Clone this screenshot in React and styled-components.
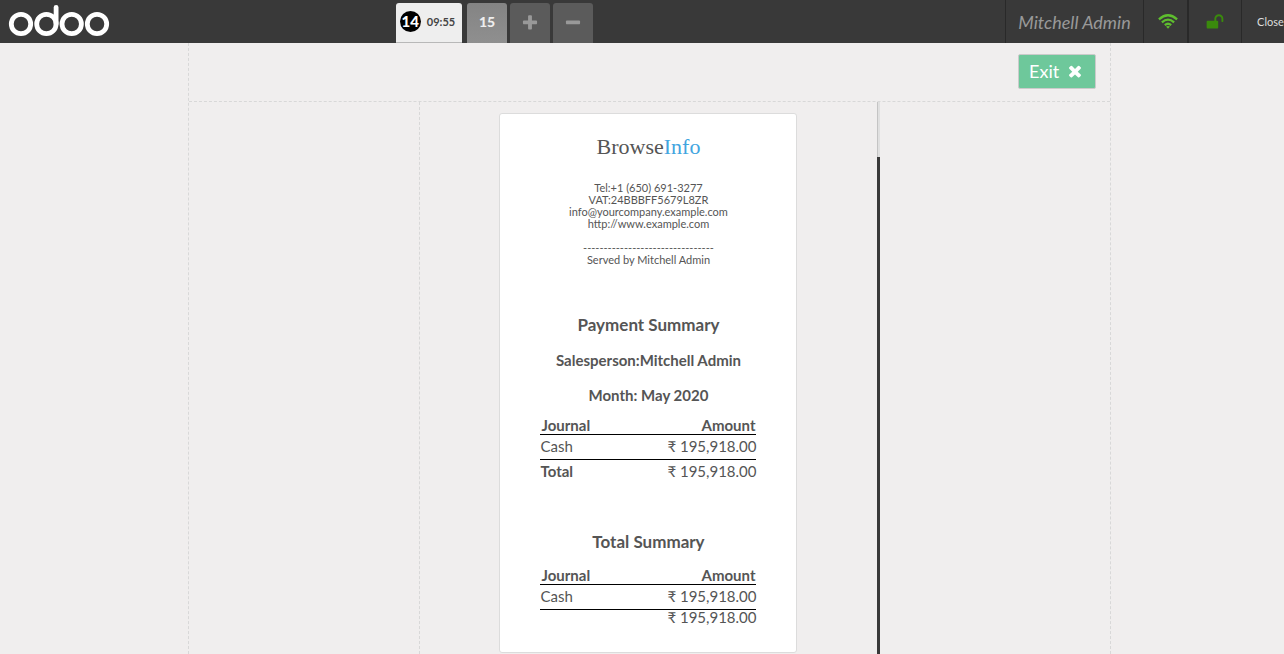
import React from "react";
import styled, { createGlobalStyle, css } from "styled-components";

const Global = createGlobalStyle`
  *, *::before, *::after { box-sizing: border-box; }
  html, body, #root { height: 100%; }
  body {
    margin: 0;
    overflow: hidden;
    background: #f0eeee;
    color: #555555;
    font-family: Lato, "Noto Sans", sans-serif;
  }
  button { font-family: inherit; margin: 0; cursor: pointer; }
`;

const Pos = styled.div`
  display: flex;
  flex-direction: column;
  width: calc(100% + 15px);
  height: 100vh;
`;

const TopBar = styled.header`
  display: flex;
  flex: none;
  height: 43px;
  background: #393939;
  color: #999999;
`;

const Brand = styled.a`
  flex: none;
  width: 396px;
  padding: 5px 8px;
  svg { display: block; }
`;

const OrderTabs = styled.nav`
  display: flex;
  flex: 1;
  gap: 3px;
  padding-top: 3px;
`;

const tabLooks = {
  selected: css`
    width: 66px;
    margin-right: 2px;
    padding: 0 3px 3px 0;
    background: #eeeeee;
    color: #444444;
    border-bottom: 1px solid #b8b8b8;
  `,
  order: css`
    padding: 0 0 3px;
    background: linear-gradient(#848484, #8f8f8f);
    color: #eeeeee;
  `,
  tool: css`
    padding: 0;
    background: #5b5b5b;
    color: #999999;
  `,
};

const Tab = styled.button`
  display: flex;
  align-items: center;
  justify-content: center;
  gap: 6px;
  width: 40px;
  height: 40px;
  border: 0;
  border-radius: 3px 3px 0 0;
  font-size: 14px;
  font-weight: 900;
  ${({ $look }) => tabLooks[$look]}
`;

const Sequence = styled.span`
  width: 21px;
  height: 21px;
  border-radius: 50%;
  background: #000000;
  color: #ffffff;
  font-size: 15px;
  line-height: 21px;
  text-align: center;
`;

const OrderTime = styled.time`
  font-size: 11px;
  font-weight: 700;
`;

const Status = styled.div`
  display: flex;
  flex: none;
`;

const barItem = css`
  display: flex;
  align-items: center;
  justify-content: center;
  height: 43px;
  border: 0;
  border-left: 1px solid #292929;
  background: none;
`;

const UserName = styled.span`
  ${barItem}
  width: 138px;
  font-size: 18px;
  font-style: italic;
`;

const StatusButton = styled.button`
  ${barItem}
  width: ${({ $width }) => $width}px;
  padding: 0;
  color: ${({ $color }) => $color};
  font-size: 11px;
`;

const ConnectionButton = styled(StatusButton)`
  padding-left: 5px;
  border-right: 1px solid #292929;
`;

const Screen = styled.main`
  display: flex;
  flex: 1;
  flex-direction: column;
  min-height: 0;
  width: 71%;
  min-width: 600px;
  max-width: 1024px;
  margin: 0 auto;
  border: dashed #d8d8d8;
  border-width: 0 1px;
`;

const Toolbar = styled.div`
  display: flex;
  flex: none;
  align-items: flex-start;
  justify-content: flex-end;
  height: 59px;
  padding: 11px 14px;
  border-bottom: 1px dashed #d8d8d8;
`;

const ExitButton = styled.button`
  display: flex;
  align-items: center;
  justify-content: center;
  gap: 7px;
  width: 78px;
  height: 35px;
  padding: 0 0 1px;
  border: 1px solid #cbcbcb;
  border-radius: 2px;
  background: #6ec89b;
  color: #ffffff;
  font-size: 18px;
`;

const Columns = styled.div`
  display: grid;
  flex: 1;
  grid-template-columns: 1fr 2fr 1fr;
  min-height: 0;
`;

const ReceiptPane = styled.section`
  display: flex;
  grid-column: 2;
  min-height: 0;
  border-left: 1px dashed #d8d8d8;
`;

const ReceiptArea = styled.div`
  flex: 1;
  padding-top: 11px;
  overflow: hidden;
`;

const ScrollTrack = styled.div`
  width: 3px;
  padding-top: 55px;
  background: linear-gradient(90deg, #c4c4c4 1px, #e0e0e0 1px);
`;

const ScrollThumb = styled.div`
  height: 100%;
  background: #393939;
`;

const Ticket = styled.article`
  width: 298px;
  margin: 0 auto;
  padding: 20px 40px 28px;
  border: 1px solid #dcdcdc;
  border-radius: 3px;
  background: #ffffff;
  text-align: center;
`;

const Company = styled.div`
  font-family: "Liberation Serif", serif;
  font-size: 22px;
  line-height: 26px;
  span { color: #42a5e0; }
`;

const Contact = styled.address`
  margin: 22px 0 48px;
  font-size: 11px;
  font-style: normal;
  line-height: 12px;
  p { margin: 0; }
`;

const ServedBy = styled.div`
  margin-top: 12px;
`;

const Title = styled.h2`
  margin: 0;
  font-size: 17px;
  line-height: 22px;
`;

const Detail = styled.h3`
  margin: 0;
  padding-top: 16px;
  font-size: 15px;
  line-height: 19px;
  ${Title} + & { padding-top: 15px; }
`;

const Summary = styled.table`
  width: 100%;
  margin: ${({ $top }) => $top}px 0 0;
  border-collapse: collapse;
  font-size: 15px;
  line-height: 18px;
  th, td { padding: 0; text-align: left; }
  th:last-child, td:last-child { text-align: right; }
  thead th { padding: 0 1px; border-bottom: 1px solid #000000; }
  tbody td { padding: 2px 0 4px; }
  tfoot { line-height: 14px; }
  tfoot tr { border-top: 1px solid #000000; }
  tfoot th, tfoot td { padding-top: ${({ $foot }) => $foot}px; }
`;

const TotalSection = styled.section`
  margin-top: 53px;
`;

const shapes = {
  plus: "M1600 736v192q0 40-28 68t-68 28h-416v416q0 40-28 68t-68 28h-192q-40 0-68-28t-28-68v-416h-416q-40 0-68-28t-28-68v-192q0-40 28-68t68-28h416v-416q0-40 28-68t68-28h192q40 0 68 28t28 68v416h416q40 0 68 28t28 68z",
  minus: "M1600 736v192q0 40-28 68t-68 28h-1216q-40 0-68-28t-28-68v-192q0-40 28-68t68-28h1216q40 0 68 28t28 68z",
  times: "M1490 1322q0 40-28 68l-136 136q-28 28-68 28t-68-28l-294-294-294 294q-28 28-68 28t-68-28l-136-136q-28-28-28-68t28-68l294-294-294-294q-28-28-28-68t28-68l136-136q28-28 68-28t68 28l294 294 294-294q28-28 68-28t68 28l136 136q28 28 28 68t-28 68l-294 294 294 294q28 28 28 68z",
  unlock: "M1728 576v256q0 26-19 45t-45 19h-64q-26 0-45-19t-19-45v-256q0-106-75-181t-181-75-181 75-75 181v192h96q40 0 68 28t28 68v576q0 40-28 68t-68 28h-960q-40 0-68-28t-28-68v-576q0-40 28-68t68-28h672v-192q0-185 131.5-316.5t316.5-131.5 316.5 131.5 131.5 316.5z",
};

function Icon({ name, size = 18 }) {
  return (
    <svg width={size} height={size} viewBox="0 0 1792 1792" fill="currentColor" aria-hidden="true">
      <path d={shapes[name]} />
    </svg>
  );
}

function WifiIcon() {
  return (
    <svg width="20" height="15" viewBox="0 0 20 15" fill="none" stroke="currentColor" strokeWidth="2.3" aria-hidden="true">
      <path d="M0.9 5.3Q10 -2.7 19.1 5.3" />
      <path d="M3.9 8.3Q10 3 16.1 8.3" />
      <path d="M6.8 11.1Q10 8.5 13.2 11.1" />
      <path d="M8 12.6Q10 11.4 12 12.6L10 14.8Z" fill="currentColor" stroke="none" />
    </svg>
  );
}

function OdooLogo() {
  return (
    <svg width="102" height="32" viewBox="0 0 102 32" fill="none" stroke="#ffffff" strokeWidth="4.8" role="img" aria-label="odoo">
      <circle cx="13" cy="19" r="9.7" />
      <circle cx="38.4" cy="19" r="9.7" />
      <circle cx="63.7" cy="19" r="9.7" />
      <circle cx="89" cy="19" r="9.7" />
      <path d="M48.1 19V2.5" strokeLinecap="round" />
    </svg>
  );
}

function SummaryTable({ top, foot, totalLabel }) {
  return (
    <Summary $top={top} $foot={foot}>
      <thead>
        <tr><th scope="col">Journal</th><th scope="col">Amount</th></tr>
      </thead>
      <tbody>
        <tr><td>Cash</td><td>₹ 195,918.00</td></tr>
      </tbody>
      <tfoot>
        <tr><th scope="row">{totalLabel}</th><td>₹ 195,918.00</td></tr>
      </tfoot>
    </Summary>
  );
}

export default function App() {
  return (
    <>
      <Global />
      <Pos>
        <TopBar>
          <Brand href="#"><OdooLogo /></Brand>
          <OrderTabs aria-label="Orders">
            <Tab $look="selected"><Sequence>14</Sequence><OrderTime>09:55</OrderTime></Tab>
            <Tab $look="order">15</Tab>
            <Tab $look="tool" aria-label="New order"><Icon name="plus" /></Tab>
            <Tab $look="tool" aria-label="Delete order"><Icon name="minus" /></Tab>
          </OrderTabs>
          <Status>
            <UserName>Mitchell Admin</UserName>
            <ConnectionButton $width={45} $color="#5ebd2e" aria-label="Connection"><WifiIcon /></ConnectionButton>
            <StatusButton $width={53} $color="#3a8a0c" aria-label="Unlock"><Icon name="unlock" /></StatusButton>
            <StatusButton $width={58} $color="#dddddd">Close</StatusButton>
          </Status>
        </TopBar>
        <Screen>
          <Toolbar>
            <ExitButton>Exit <Icon name="times" /></ExitButton>
          </Toolbar>
          <Columns>
            <ReceiptPane>
              <ReceiptArea>
                <Ticket>
                  <Company>Browse<span>Info</span></Company>
                  <Contact>
                    <p>Tel:+1 (650) 691-3277</p>
                    <p>VAT:24BBBFF5679L8ZR</p>
                    <p>info@yourcompany.example.com</p>
                    <p>http://www.example.com</p>
                    <ServedBy>
                      <p>--------------------------------</p>
                      <p>Served by Mitchell Admin</p>
                    </ServedBy>
                  </Contact>
                  <Title>Payment Summary</Title>
                  <Detail>Salesperson:Mitchell Admin</Detail>
                  <Detail>Month: May 2020</Detail>
                  <SummaryTable top={11} foot={4} totalLabel="Total" />
                  <TotalSection>
                    <Title>Total Summary</Title>
                    <SummaryTable top={13} foot={0} totalLabel="" />
                  </TotalSection>
                </Ticket>
              </ReceiptArea>
              <ScrollTrack><ScrollThumb /></ScrollTrack>
            </ReceiptPane>
          </Columns>
        </Screen>
      </Pos>
    </>
  );
}
